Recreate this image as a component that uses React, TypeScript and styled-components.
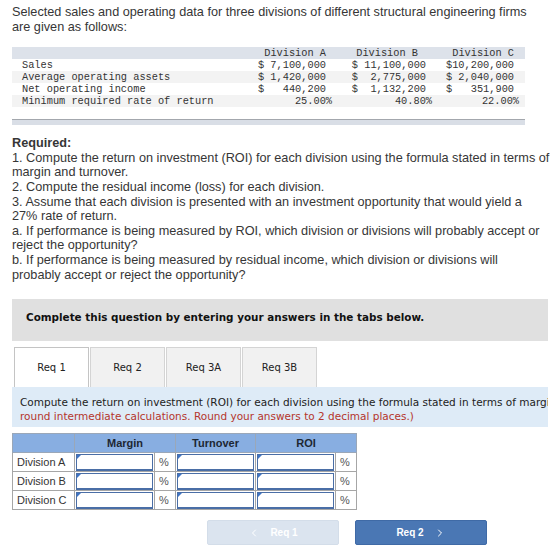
import React from 'react';
import styled, { createGlobalStyle } from 'styled-components';
import { ChevronLeft, ChevronRight } from 'lucide-react';

const GlobalStyle = createGlobalStyle`
  html, body {
    margin: 0;
    padding: 0;
    background: #fff;
    overflow: hidden;
  }
  body {
    font-family: "Liberation Sans", Arial, sans-serif;
    color: #333;
  }
`;

const Page = styled.div`
  width: 560px;
  box-sizing: border-box;
  padding: 5px 0 0 12px;
`;

const Prose = styled.div<{ $w: number; $gap?: number }>`
  width: ${(p) => p.$w}px;
  margin-top: ${(p) => p.$gap ?? 0}px;
  font-size: 12.7px;
  line-height: 14.6px;
  color: #363636;
`;

const Strong = styled.div`
  font-weight: 700;
`;

/* ---- data table ---- */

const DataBlock = styled.div`
  width: 513px;
  margin-top: 13px;
  font-family: "Liberation Mono", "Courier New", monospace;
  font-size: 10.3px;
  color: #333;
`;

type Tone = 'head' | 'plain' | 'shade';

const toneBg: Record<Tone, string> = {
  head: '#dde2ea',
  plain: '#ffffff',
  shade: '#f3f3f3',
};

const DataRow = styled.div<{ $tone: Tone }>`
  display: grid;
  grid-template-columns: 240px 80px 100px 87px;
  height: 12px;
  line-height: 12px;
  background: ${(p) => toneBg[p.$tone]};
`;

const DataLabel = styled.span`
  padding-left: 10px;
  white-space: pre;
`;

const DataValue = styled.span<{ $pad: number }>`
  text-align: right;
  white-space: pre;
  padding-right: ${(p) => p.$pad}px;
`;

const DataFoot = styled.div`
  margin-top: 12px;
  height: 5px;
  background: #d9dee6;
  border-top: 1px solid #a3a7ad;
`;

/* ---- question panel ---- */

const Clip = styled.div`
  width: 536px;
  overflow: hidden;
  margin-top: 17px;
  font-family: "DejaVu Sans", Verdana, sans-serif;
`;

const Panel = styled.div`
  width: 690px;
`;

const Banner = styled.div`
  height: 42px;
  box-sizing: border-box;
  padding: 12px 0 0 14px;
  background: #e0e0e0;
  font-size: 10.4px;
  font-weight: 700;
  line-height: 12px;
  color: #111;
`;

const TabBar = styled.div`
  display: flex;
  gap: 1px;
  margin: 6px 0 0 2px;
`;

const Tab = styled.div<{ $active?: boolean }>`
  width: 75px;
  height: 40px;
  box-sizing: border-box;
  display: flex;
  align-items: center;
  justify-content: center;
  font-size: 10px;
  color: #222;
  border: 1px solid ${(p) => (p.$active ? '#c4c4c4' : '#d4d4d4')};
  border-bottom: none;
  background: ${(p) => (p.$active ? '#ffffff' : '#f1f1f1')};
`;

const Prompt = styled.div`
  background: #deebf7;
  padding: 8px 8px 4px 8px;
  font-size: 10.5px;
  line-height: 14px;
  color: #222;
`;

const Warn = styled.span`
  color: #b5352c;
`;

/* ---- answer grid ---- */

const AnswerTable = styled.table`
  margin-top: 6px;
  border-collapse: collapse;
  table-layout: fixed;
  width: 344px;
  font-family: "Liberation Sans", Arial, sans-serif;
  font-size: 11px;
`;

const Col = styled.col<{ $w: number }>`
  width: ${(p) => p.$w}px;
`;

const HeadCell = styled.th`
  height: 18px;
  padding: 0;
  background: #88aee1;
  border: 1px solid #9aa7b8;
  font-weight: 700;
  color: #1d2733;
  text-align: center;
`;

const LabelCell = styled.td`
  height: 18px;
  padding: 0 0 0 4px;
  border: 1px solid #a6a6a6;
  color: #333;
  white-space: nowrap;
`;

const UnitCell = styled.td`
  padding: 0 0 0 4px;
  border: 1px solid #a6a6a6;
  color: #555;
`;

const InputCell = styled.td`
  padding: 1px 1px 0 1px;
  border: 1px solid #a6a6a6;
`;

const FieldWrap = styled.div`
  position: relative;

  &::after {
    content: '';
    position: absolute;
    left: 1px;
    top: 1px;
    border-top: 4px solid #3f74c4;
    border-right: 4px solid transparent;
  }
`;

const Field = styled.input`
  display: block;
  width: 100%;
  height: 17px;
  box-sizing: border-box;
  border: 1px solid #4a6ea6;
  border-bottom-width: 2px;
  background: #fff;
  padding: 0 3px;
  font: inherit;
  outline: none;
`;

/* ---- nav ---- */

const Nav = styled.div`
  display: flex;
  gap: 16px;
  margin: 10px 0 0 195px;
`;

const NavButton = styled.button<{ $primary?: boolean }>`
  width: 132px;
  height: 25px;
  display: flex;
  align-items: center;
  justify-content: center;
  gap: 10px;
  border: 1px solid ${(p) => (p.$primary ? '#3f6aa6' : '#d3dde9')};
  border-radius: 2px;
  background: ${(p) => (p.$primary ? '#4a77b4' : '#dbe4ef')};
  color: #fff;
  font-family: "Liberation Sans", Arial, sans-serif;
  font-size: 10px;
  font-weight: 700;
  padding: 0;
`;

const dataRows: { label: string; tone: Tone; a: string; b: string; c: string; pct?: boolean }[] = [
  { label: 'Sales', tone: 'plain', a: '$ 7,100,000', b: '$ 11,100,000', c: '$10,200,000' },
  { label: 'Average operating assets', tone: 'shade', a: '$ 1,420,000', b: '$  2,775,000', c: '$ 2,040,000' },
  { label: 'Net operating income', tone: 'plain', a: '$   440,200', b: '$  1,132,200', c: '$   351,900' },
  { label: 'Minimum required rate of return', tone: 'shade', a: '25.00%', b: '40.80%', c: '22.00%', pct: true },
];

const divisions = ['Division A', 'Division B', 'Division C'];

function AnswerField() {
  return (
    <FieldWrap>
      <Field type="text" readOnly />
    </FieldWrap>
  );
}

export default function App() {
  return (
    <>
      <GlobalStyle />
      <Page>
        <Prose $w={520}>
          Selected sales and operating data for three divisions of different structural engineering firms
          are given as follows:
        </Prose>

        <DataBlock>
          <DataRow $tone="head">
            <DataLabel />
            <DataValue $pad={6}>Division A</DataValue>
            <DataValue $pad={14}>Division B</DataValue>
            <DataValue $pad={5}>Division C</DataValue>
          </DataRow>
          {dataRows.map((r) => (
            <DataRow key={r.label} $tone={r.tone}>
              <DataLabel>{r.label}</DataLabel>
              <DataValue $pad={r.pct ? 0 : 6}>{r.a}</DataValue>
              <DataValue $pad={r.pct ? 0 : 6}>{r.b}</DataValue>
              <DataValue $pad={r.pct ? 0 : 5}>{r.c}</DataValue>
            </DataRow>
          ))}
          <DataFoot />
        </DataBlock>

        <Prose $w={538} $gap={11}>
          <Strong>Required:</Strong>
          <div>1. Compute the return on investment (ROI) for each division using the formula stated in terms of margin and turnover.</div>
          <div>2. Compute the residual income (loss) for each division.</div>
          <div>3. Assume that each division is presented with an investment opportunity that would yield a 27% rate of return.</div>
          <div>a. If performance is being measured by ROI, which division or divisions will probably accept or reject the opportunity?</div>
          <div>b. If performance is being measured by residual income, which division or divisions will probably accept or reject the opportunity?</div>
        </Prose>

        <Clip>
          <Panel>
            <Banner>Complete this question by entering your answers in the tabs below.</Banner>
            <TabBar>
              <Tab $active>Req 1</Tab>
              <Tab>Req 2</Tab>
              <Tab>Req 3A</Tab>
              <Tab>Req 3B</Tab>
            </TabBar>
            <Prompt>
              Compute the return on investment (ROI) for each division using the formula stated in terms of margin and
              turnover. <Warn>(Do not round intermediate calculations. Round your answers to 2 decimal places.)</Warn>
            </Prompt>
          </Panel>
        </Clip>

        <AnswerTable>
          <colgroup>
            <Col $w={62} />
            <Col $w={80} />
            <Col $w={21} />
            <Col $w={80} />
            <Col $w={80} />
            <Col $w={21} />
          </colgroup>
          <thead>
            <tr>
              <HeadCell />
              <HeadCell colSpan={2}>Margin</HeadCell>
              <HeadCell>Turnover</HeadCell>
              <HeadCell colSpan={2}>ROI</HeadCell>
            </tr>
          </thead>
          <tbody>
            {divisions.map((d) => (
              <tr key={d}>
                <LabelCell>{d}</LabelCell>
                <InputCell>
                  <AnswerField />
                </InputCell>
                <UnitCell>%</UnitCell>
                <InputCell>
                  <AnswerField />
                </InputCell>
                <InputCell>
                  <AnswerField />
                </InputCell>
                <UnitCell>%</UnitCell>
              </tr>
            ))}
          </tbody>
        </AnswerTable>

        <Nav>
          <NavButton type="button">
            <ChevronLeft size={12} strokeWidth={2} />
            Req 1
          </NavButton>
          <NavButton type="button" $primary>
            Req 2
            <ChevronRight size={12} strokeWidth={2} />
          </NavButton>
        </Nav>
      </Page>
    </>
  );
}
